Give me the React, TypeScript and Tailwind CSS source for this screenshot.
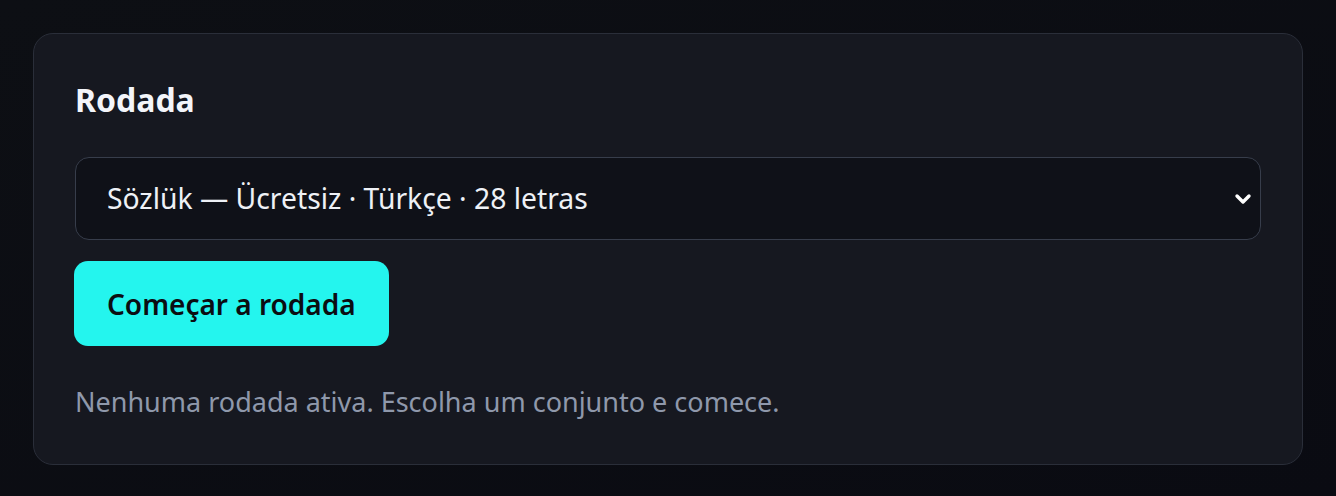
import { useState } from 'react'

const SETS = [
  'Sözlük — Ücretsiz · Türkçe · 28 letras',
  'Palavras — Grátis · Português · 26 letras',
]

export default function App() {
  const [set, setSet] = useState(SETS[0])

  return (
    <div className="min-h-[496px] bg-gradient-to-br from-[#0d0f14] to-[#0a0b12] px-[33px] pt-[33px] font-['Noto_Sans',sans-serif]">
      <section className="rounded-[20px] border border-[#2a2e39] bg-[#161820] px-[41px] pt-[46px] pb-[44px]">
        <h2 className="text-[32px] leading-[40px] font-bold text-[#f3f5fa]">Rodada</h2>
        <div className="relative mt-[37px]">
          <select
            value={set}
            onChange={(e) => setSet(e.target.value)}
            className="h-[83px] w-full appearance-none rounded-[14px] border border-[#373d4b] bg-[#0f1118] pl-[31px] pr-12 text-[28.3px] text-[#eef1f6] outline-none"
          >
            {SETS.map((s) => (
              <option key={s}>{s}</option>
            ))}
          </select>
          <svg
            className="pointer-events-none absolute top-1/2 right-[8px] h-[20px] w-[20px] -translate-y-1/2 text-white"
            viewBox="0 0 20 20"
            fill="none"
            stroke="currentColor"
            strokeWidth="3.4"
            strokeLinecap="round"
            strokeLinejoin="round"
          >
            <path d="M4 7l6 6 6-6" />
          </svg>
        </div>
        <button
          type="button"
          className="-ml-px mt-[21px] h-[85px] rounded-[14px] bg-[#24f5ee] px-[33px] text-[28px] font-semibold text-[#0b0d12]"
        >
          Começar a rodada
        </button>
        <p className="mt-[38px] text-[27px] leading-[36px] text-[#8f98ab]">
          Nenhuma rodada ativa. Escolha um conjunto e comece.
        </p>
      </section>
    </div>
  )
}
